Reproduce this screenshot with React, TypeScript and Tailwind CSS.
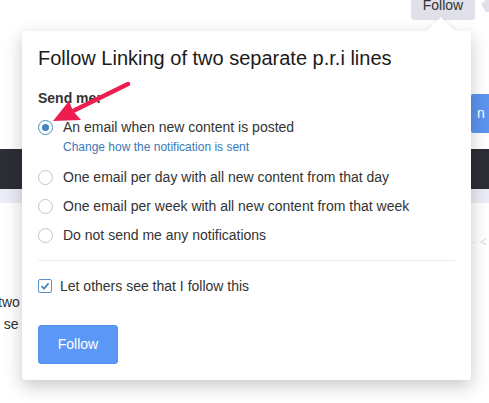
import React from "react";

const Radio = ({ checked }: { checked?: boolean }) => (
  <span
    className={
      "flex h-[15px] w-[15px] shrink-0 items-center justify-center rounded-full border bg-white " +
      (checked ? "border-[#4d8bc6]" : "border-[#c4c4c4]")
    }
  >
    {checked && <span className="h-[7px] w-[7px] rounded-full bg-[#4684c2]" />}
  </span>
);

const Option = ({ label, checked }: { label: string; checked?: boolean }) => (
  <div className="flex h-[20px] items-center gap-[10px]">
    <Radio checked={checked} />
    <span className="text-[14px] text-[#333]">{label}</span>
  </div>
);

export default function App() {
  return (
    <div
      className="relative h-[403px] w-[489px] overflow-hidden bg-white"
      style={{ fontFamily: '"Liberation Sans", Arial, sans-serif' }}
    >
      {/* background page */}
      <div className="flex flex-col">
        <div className="flex h-[94px] items-start justify-end">
          <div className="-mt-[10px] flex h-[30px] w-[64px] items-center justify-center rounded-[3px] bg-[#dfe0e8] text-[14px] text-[#333]">
            Follow
          </div>
          <svg width="8" height="14" className="ml-[6px]" viewBox="0 0 8 14">
            <polygon points="0,4 5,0 8,0 8,12 5,12" fill="#dfe0e8" />
          </svg>
        </div>
        <div className="flex h-[39px] justify-end">
          <div className="flex w-[18px] items-center rounded-l-[2px] bg-[#5b95f0] pl-[6px] text-[14px] text-white">
            n
          </div>
        </div>
        <div className="mt-[16px] h-[40px] bg-[#2d2e34]" />
        <div className="h-[14px] bg-[#ebecf5]" />
        <div className="flex h-[88px] items-end justify-end pr-[2px] pb-[40px] text-[12px] text-[#ddd]">
          <span className="mr-[4px]">·</span>
          <span>&lt;</span>
        </div>
        <div className="-ml-[2px] text-[14px] leading-[22px] text-[#333]">
          <div>two</div>
          <div className="-ml-[6px]">o se</div>
        </div>
      </div>

      {/* popover */}
      <div className="absolute left-[22px] top-[31px] w-[449px] rounded-[3px] bg-white px-[16px] pb-[16px] pt-[16px] shadow-[0_6px_18px_rgba(0,0,0,0.22)]">
        <div className="absolute -top-[14px] right-[16px] h-[14px] w-[28px] overflow-hidden">
          <div className="absolute left-[4px] top-[4px] h-[20px] w-[20px] rotate-45 bg-white shadow-[0_0_4px_rgba(0,0,0,0.10)]" />
        </div>
        <div className="relative">
          <div className="text-[20px] leading-[22px] text-[#1b1b1b]">
            Follow Linking of two separate p.r.i lines
          </div>
          <div className="mt-[19px] text-[14px] font-bold leading-[20px] text-[#333]">Send me:</div>
          <div className="mt-[9px]">
            <Option checked label="An email when new content is posted" />
            <div className="mt-[2px] pl-[25px] text-[12px] leading-[16px] text-[#3a79b8]">
              Change how the notification is sent
            </div>
          </div>
          <div className="mt-[12px] flex flex-col gap-[9px]">
            <Option label="One email per day with all new content from that day" />
            <Option label="One email per week with all new content from that week" />
            <Option label="Do not send me any notifications" />
          </div>
          <div className="mt-[15px] h-px bg-[#ececec]" />
          <div className="mt-[15px] flex h-[20px] items-center gap-[8px]">
            <span className="flex h-[14px] w-[14px] items-center justify-center rounded-[2px] border border-[#5b8fc8] bg-white">
              <svg width="10" height="10" viewBox="0 0 10 10">
                <path d="M1.5 5.2 L4 7.6 L8.6 2.4" fill="none" stroke="#4f86c2" strokeWidth="1.8" />
              </svg>
            </span>
            <span className="text-[14px] text-[#333]">Let others see that I follow this</span>
          </div>
          <button className="mt-[29px] flex h-[39px] w-[80px] items-center justify-center rounded-[3px] border border-[#5290f0] bg-[#5b97f6] text-[14px] text-white">
            Follow
          </button>
        </div>
      </div>

      {/* red annotation arrow */}
      <svg className="pointer-events-none absolute left-0 top-0" width="489" height="403">
        <line x1="128" y1="84" x2="73" y2="111" stroke="#ee1d4f" strokeWidth="4.5" strokeLinecap="round" />
        <polygon points="53,121 69,101 73,111 81,120" fill="#ee1d4f" />
      </svg>
    </div>
  );
}
